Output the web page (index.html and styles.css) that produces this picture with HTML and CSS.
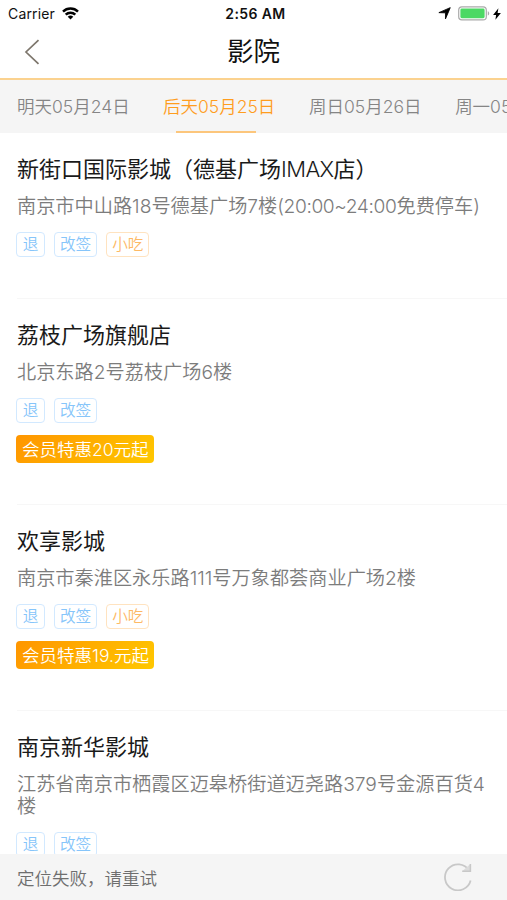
FILE: index.html
```html
<!DOCTYPE html>
<html lang="zh-CN">
<head>
    <meta charset="UTF-8">
    <meta name="viewport" content="width=device-width, initial-scale=1.0">
    <title>影院</title>
    <link rel="stylesheet" href="styles.css">
</head>
<body>
    <div class="app">
        <!-- Status Bar -->
        <div class="status-bar">
            <div class="status-left">
                <span>Carrier</span>
                <svg class="wifi" width="17" height="13" viewBox="0 0 17 13" fill="none" stroke="#000" stroke-width="2.5">
                    <path d="M1 4.6a10.8 10.8 0 0 1 15 0"/>
                    <path d="M3.7 7.6a6.9 6.9 0 0 1 9.6 0"/>
                    <path d="M8.5 12.6L5.7 9.8a4 4 0 0 1 5.6 0z" fill="#000" stroke="none"/>
                </svg>
            </div>
            <div class="status-time">2:56 AM</div>
            <div class="status-right">
                <svg width="13" height="13" viewBox="0 0 12 12">
                    <path d="M11.3 0.6L6.9 11V5.4L0.8 5.2z" fill="#000" stroke="#000" stroke-width="0.8" stroke-linejoin="round"/>
                </svg>
                <svg class="battery" width="32" height="15" viewBox="0 0 32 15">
                    <rect x="0.7" y="0.9" width="27.6" height="13" rx="3.2" fill="#fff" stroke="#aaa" stroke-width="1.2"/>
                    <rect x="2.4" y="2.6" width="24.2" height="9.6" rx="1.4" fill="#4cd964"/>
                    <path d="M29.8 5.2v4.4c1.9-.7 1.9-3.7 0-4.4z" fill="#aaa"/>
                </svg>
                <svg width="8" height="12" viewBox="0 0 8 12">
                    <path d="M5.4 0.2L0.1 7h3L2.4 11.8 7.9 4.9H4.6z" fill="#000"/>
                </svg>
            </div>
        </div>

        <!-- Header -->
        <div class="header">
            <svg class="back" width="16" height="26" viewBox="0 0 16 26" fill="none" stroke="#7d766c" stroke-width="1.7">
                <path d="M14.5 1.2L2 13l12.5 11.8"/>
            </svg>
            <h1>影院</h1>
        </div>

        <!-- Date Tabs -->
        <div class="tabs">
            <div class="tab">明天05月24日</div>
            <div class="tab active">后天05月25日</div>
            <div class="tab">周日05月26日</div>
            <div class="tab">周一05月27日</div>
        </div>

        <!-- Cinema List -->
        <div class="list">
            <div class="cinema">
                <h2>新街口国际影城（德基广场<span class="latin">IMAX</span>店<span class="paren">）</span></h2>
                <p>南京市中山路18号德基广场7楼<span class="hours">(20:00~24:00</span>免费停车)</p>
                <div class="tags">
                    <span class="tag">退</span>
                    <span class="tag">改签</span>
                    <span class="tag snack">小吃</span>
                </div>
            </div>
            <div class="cinema">
                <h2>荔枝广场旗舰店</h2>
                <p>北京东路2号荔枝广场6楼</p>
                <div class="tags">
                    <span class="tag">退</span>
                    <span class="tag">改签</span>
                </div>
                <div class="vip">会员特惠20元起</div>
            </div>
            <div class="cinema">
                <h2>欢享影城</h2>
                <p>南京市秦淮区永乐路111号万象都荟商业广场2楼</p>
                <div class="tags">
                    <span class="tag">退</span>
                    <span class="tag">改签</span>
                    <span class="tag snack">小吃</span>
                </div>
                <div class="vip">会员特惠19.元起</div>
            </div>
            <div class="cinema">
                <h2>南京新华影城</h2>
                <p>江苏省南京市栖霞区迈皋桥街道迈尧路379号金源百货4楼</p>
                <div class="tags">
                    <span class="tag">退</span>
                    <span class="tag">改签</span>
                </div>
            </div>
        </div>

        <!-- Location Bar -->
        <div class="location">
            <span>定位失败，请重试</span>
            <svg width="28" height="28" viewBox="0 0 28 28" fill="none" stroke="#c8c8c8" stroke-width="1.8">
                <path d="M26.6 17.5A13 13 0 1 1 25 7.4"/>
                <path d="M26.4 1v7.2h-8.2z" fill="#dcdcdc" stroke="none"/>
                <path d="M26.4 1v7.2h-8.2" stroke-width="1.5"/>
            </svg>
        </div>
    </div>
</body>
</html>
```
FILE: styles.css
```css
/* Global Styles */
body {
    margin: 0;
    font-family: Inter, "Noto Sans CJK SC", sans-serif;
    font-weight: 350;
    background: #fff;
    color: #1a1a1a;
}

.app {
    height: 900px;
    display: flex;
    flex-direction: column;
    overflow: hidden;
}

/* Status Bar */
.status-bar {
    flex: none;
    height: 27px;
    padding: 0 6px 0 8px;
    display: grid;
    grid-template-columns: 1fr auto 1fr;
    align-items: center;
    font-size: 14px;
    font-weight: 400;
    color: #111;
}

.status-left,
.status-right {
    display: flex;
    align-items: center;
}

.status-left {
    gap: 7px;
    letter-spacing: 0.15px;
}

.status-right {
    justify-content: flex-end;
    gap: 3px;
}

.battery {
    margin-left: 4px;
}

.status-time {
    padding-left: 2px;
    font-weight: 600;
    letter-spacing: 0.4px;
}

/* Header */
.header {
    flex: none;
    height: 51px;
    display: grid;
    grid-template-columns: 60px 1fr 60px;
    align-items: center;
    border-bottom: 2px solid #fbd28f;
}

.back {
    margin: -1px 0 0 24px;
}

.header h1 {
    margin: 0;
    padding-bottom: 4px;
    font-size: 26.5px;
    font-weight: 400;
    line-height: 46px;
    text-align: center;
    color: #111;
}

/* Date Tabs */
.tabs {
    flex: none;
    height: 53px;
    padding-left: 17px;
    display: flex;
    gap: 34px;
    background: #f5f5f5;
    overflow: hidden;
}

.tab {
    flex: none;
    width: 112px;
    font-size: 17.5px;
    line-height: 53px;
    text-align: center;
    white-space: nowrap;
    color: #858585;
}

.tab.active {
    color: #ff9d1e;
}

.tab.active::after {
    content: "";
    display: block;
    width: 80px;
    height: 2px;
    margin: -2px 0 0 13px;
    background: #fcc67c;
}

/* Cinema List */
.list {
    flex: 1;
    min-height: 0;
    overflow: hidden;
}

.cinema {
    margin-left: 17px;
    padding: 21px 16px 41px 0;
    border-bottom: 1px solid #f7f7f7;
}

.cinema h2 {
    margin: 0;
    font-size: 22px;
    font-weight: 400;
    line-height: 30px;
    white-space: nowrap;
}

.cinema h2 .latin {
    font-weight: 350;
    letter-spacing: -0.6px;
}

.cinema h2 .paren {
    letter-spacing: -2px;
}

.cinema p {
    margin: 11px 0 15px;
    font-size: 19.2px;
    line-height: 22px;
    color: #7c7c7c;
}

.cinema p .hours {
    letter-spacing: -0.4px;
}

.tags {
    display: flex;
    gap: 9px;
    margin-left: -1px;
}

.tag {
    box-sizing: border-box;
    min-width: 29px;
    padding: 0 5px;
    border: 1px solid #d2e9ff;
    border-radius: 4px;
    font-size: 15.6px;
    line-height: 23px;
    text-align: center;
    color: #86c5fa;
}

.tag.snack {
    border-color: #ffe3c0;
    color: #fdb965;
}

.vip {
    width: fit-content;
    height: 28px;
    margin: 12px 0 0 -1px;
    padding: 0 5px 0 6px;
    border-radius: 4px;
    background: linear-gradient(135deg, #ff9500, #ffc800);
    font-size: 17.5px;
    line-height: 29px;
    color: #fff;
}

/* Location Bar */
.location {
    flex: none;
    height: 46px;
    padding: 0 35px 0 17px;
    display: flex;
    justify-content: space-between;
    align-items: center;
    background: #f5f5f5;
    font-size: 17.5px;
    color: #6e6e6e;
}
```
